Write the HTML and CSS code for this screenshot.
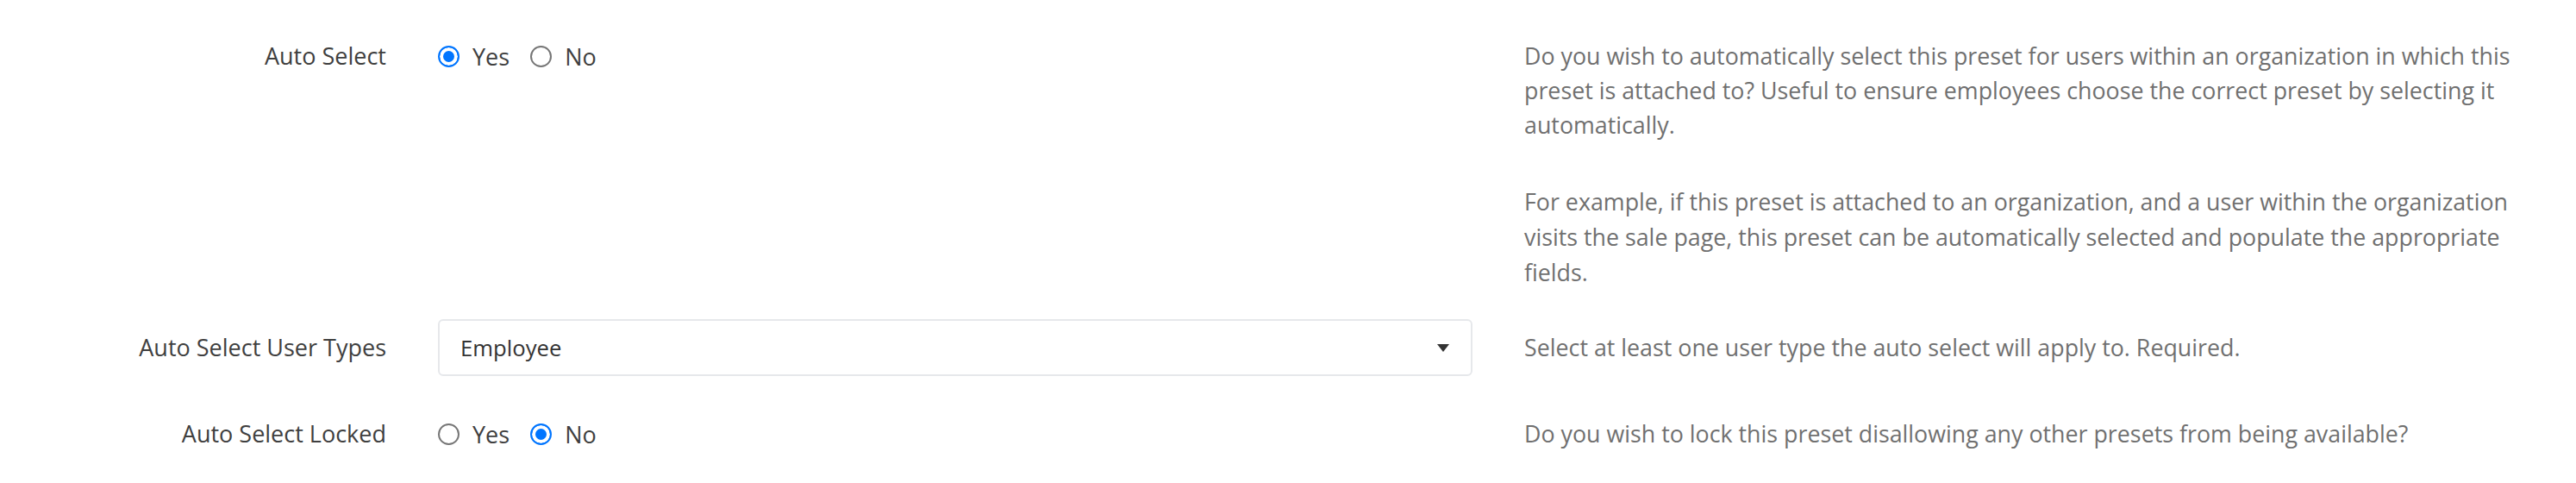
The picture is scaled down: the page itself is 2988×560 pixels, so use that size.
FILE: index.html
```html
<!doctype html>
<html lang="en">
    <head>
        <meta charset="UTF-8" />
        <meta name="viewport" content="width=device-width, initial-scale=1.0" />
        <title>Preset Auto Select</title>
        <link rel="stylesheet" href="styles.css">
    </head>
    <body>
        <div class="form">
            <div class="form-row">
                <label class="row-label">Auto Select</label>
                <div class="radio-group">
                    <label class="radio">
                        <input type="radio" name="auto_select" value="1" checked />
                        <span>Yes</span>
                    </label>
                    <label class="radio">
                        <input type="radio" name="auto_select" value="0" />
                        <span>No</span>
                    </label>
                </div>
                <div class="help">
                    <p>Do you wish to automatically select this preset for users within an organization in which this preset is attached to? Useful to ensure employees choose the correct preset by selecting it automatically.</p>
                    <p>For example, if this preset is attached to an organization, and a user within the organization visits the sale page, this preset can be automatically selected and populate the appropriate fields.</p>
                </div>
            </div>

            <div class="form-row row-select">
                <label class="row-label">Auto Select User Types</label>
                <div class="select">
                    <span class="select-value">Employee</span>
                    <span class="caret"></span>
                </div>
                <div class="help">
                    <p>Select at least one user type the auto select will apply to. Required.</p>
                </div>
            </div>

            <div class="form-row row-locked">
                <label class="row-label">Auto Select Locked</label>
                <div class="radio-group">
                    <label class="radio">
                        <input type="radio" name="auto_select_locked" value="1" />
                        <span>Yes</span>
                    </label>
                    <label class="radio">
                        <input type="radio" name="auto_select_locked" value="0" checked />
                        <span>No</span>
                    </label>
                </div>
                <div class="help">
                    <p>Do you wish to lock this preset disallowing any other presets from being available?</p>
                </div>
            </div>
        </div>
    </body>
</html>
```

FILE: styles.css
```css
body {
    font-family: "Open Sans", "Noto Sans", sans-serif;
    background-color: #fff;
    margin: 0;
    padding: 45px 40px 0 0;
}
.form-row {
    display: grid;
    grid-template-columns: 448px 1200px 1fr;
    column-gap: 60px;
    align-items: start;
}
.row-select {
    margin-top: 34px;
    align-items: center;
}
.row-locked {
    margin-top: 47px;
}
.row-label {
    text-align: right;
    font-size: 27px;
    line-height: 40px;
    color: #3f3f3f;
}
.radio-group {
    display: flex;
    align-items: center;
    height: 40px;
    gap: 24px;
}
.radio {
    display: flex;
    align-items: center;
    gap: 15px;
    font-size: 27px;
    color: #3f3f3f;
}
.radio input {
    appearance: none;
    margin: 0;
    width: 25px;
    height: 25px;
    border: 2px solid #767676;
    border-radius: 50%;
    background: #fff;
}
.radio input:checked {
    border-color: #0075ff;
    background: #0075ff;
    box-shadow: inset 0 0 0 4px #fff;
}
.select {
    display: flex;
    align-items: center;
    justify-content: space-between;
    height: 66px;
    box-sizing: border-box;
    padding: 0 25px 0 24px;
    border: 2px solid #e6e8eb;
    border-radius: 6px;
    font-size: 25.7px;
    color: #333;
}
.caret {
    width: 0;
    height: 0;
    border-left: 7.5px solid transparent;
    border-right: 7.5px solid transparent;
    border-top: 9px solid #333;
}
.help {
    font-size: 26.8px;
    line-height: 40px;
    color: #707070;
}
.help p {
    margin: 0;
}
.help p + p {
    margin-top: 48px;
    line-height: 41px;
}
```
